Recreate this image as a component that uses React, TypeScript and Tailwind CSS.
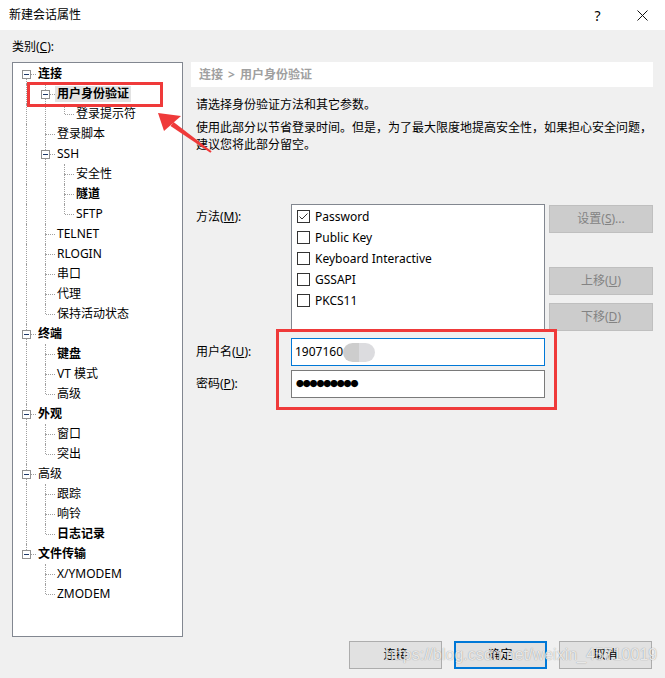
import React from "react";

type Node = { t: string; b?: boolean; sel?: boolean; c?: Node[] };
type Row = { node: Node; anc: boolean[]; hasNext: boolean; first: boolean };

const tree: Node[] = [
  {
    t: "连接",
    b: true,
    c: [
      { t: "用户身份验证", b: true, sel: true, c: [{ t: "登录提示符" }] },
      { t: "登录脚本" },
      { t: "SSH", c: [{ t: "安全性" }, { t: "隧道", b: true }, { t: "SFTP" }] },
      { t: "TELNET" },
      { t: "RLOGIN" },
      { t: "串口" },
      { t: "代理" },
      { t: "保持活动状态" },
    ],
  },
  { t: "终端", b: true, c: [{ t: "键盘", b: true }, { t: "VT 模式" }, { t: "高级" }] },
  { t: "外观", b: true, c: [{ t: "窗口" }, { t: "突出" }] },
  { t: "高级", c: [{ t: "跟踪" }, { t: "响铃" }, { t: "日志记录", b: true }] },
  { t: "文件传输", b: true, c: [{ t: "X/YMODEM" }, { t: "ZMODEM" }] },
];

function flatten(nodes: Node[], anc: boolean[], out: Row[]) {
  nodes.forEach((n, i) => {
    const hasNext = i < nodes.length - 1;
    out.push({ node: n, anc, hasNext, first: anc.length === 0 && i === 0 });
    if (n.c) flatten(n.c, [...anc, hasNext], out);
  });
  return out;
}

const rows = flatten(tree, [], []);

const methods = ["Password", "Public Key", "Keyboard Interactive", "GSSAPI", "PKCS11"];

function TreeRow({ row }: { row: Row }) {
  const { node, anc, hasNext, first } = row;
  return (
    <div className="flex h-[20px] items-center">
      {anc.map((a, k) => (
        <div key={k} className="relative h-full w-[19px] shrink-0">
          {a && <div className="absolute left-[9px] top-0 h-[20px] border-l border-dotted border-[#a0a0a0]" />}
        </div>
      ))}
      <div className="relative h-full w-[19px] shrink-0">
        {!first && <div className="absolute left-[9px] top-0 h-[10px] border-l border-dotted border-[#a0a0a0]" />}
        {hasNext && <div className="absolute left-[9px] top-[10px] h-[10px] border-l border-dotted border-[#a0a0a0]" />}
        <div className="absolute left-[10px] top-[10px] w-[9px] border-t border-dotted border-[#a0a0a0]" />
        {node.c && (
          <div className="absolute left-[5px] top-[6px] flex h-[9px] w-[9px] items-center justify-center border border-[#919191] bg-white">
            <div className="h-px w-[5px] bg-[#1e3a6a]" />
          </div>
        )}
      </div>
      <span
        className={`h-[16px] whitespace-nowrap px-[2px] leading-[16px] ${node.b ? "font-bold" : ""} ${
          node.sel ? "bg-[#e3e3e3]" : ""
        }`}
      >
        {node.t}
      </span>
    </div>
  );
}

function Checkbox({ checked }: { checked?: boolean }) {
  return (
    <div className="flex h-[13px] w-[13px] shrink-0 items-center justify-center border border-[#333333] bg-white">
      {checked && (
        <svg width="11" height="11" viewBox="0 0 11 11">
          <polyline points="1.5,5.5 4,8 9.5,2.5" fill="none" stroke="#333333" strokeWidth="1" />
        </svg>
      )}
    </div>
  );
}

function DisabledButton({ children, className }: { children: React.ReactNode; className: string }) {
  return (
    <div
      className={`flex h-[28px] w-[104px] items-center justify-center border border-[#bfbfbf] bg-[#cccccc] text-[#838383] ${className}`}
    >
      {children}
    </div>
  );
}

export default function App() {
  return (
    <div className="relative h-[678px] w-[665px] overflow-hidden bg-[#f0f0f0] font-['Noto_Sans','Noto_Sans_CJK_SC',sans-serif] text-[12px] text-black">
      {/* title bar */}
      <div className="flex h-[30px] items-center bg-white pl-[9px]">
        <span className="leading-[16px]">新建会话属性</span>
        <div className="ml-auto flex h-full w-[45px] items-center justify-center text-[14px]">?</div>
        <div className="flex h-full w-[45px] items-center justify-center">
          <svg width="11" height="11" viewBox="0 0 11 11">
            <path d="M0.5 0.5L10.5 10.5M10.5 0.5L0.5 10.5" stroke="#111" strokeWidth="1" />
          </svg>
        </div>
      </div>

      <div className="flex h-[32px] items-center pl-[12px] pt-[1px]">
        类别(<u>C</u>):
      </div>

      <div className="flex">
        {/* category tree */}
        <div className="ml-[12px] h-[575px] w-[171px] shrink-0 border border-[#828790] bg-white pl-[4px] pt-[1px]">
          {rows.map((r, i) => (
            <TreeRow key={i} row={r} />
          ))}
        </div>

        {/* settings page */}
        <div className="ml-[8px] w-[462px]">
          <div className="flex h-[25px] items-center bg-white pl-[8px] font-bold text-[#a0a0a0]">
            连接<span className="mx-[5px]">&gt;</span>用户身份验证
          </div>
          <p className="mt-[9px] pl-[5px] leading-[17px]">请选择身份验证方法和其它参数。</p>
          <p className="mt-[6px] whitespace-nowrap pl-[5px] leading-[17px]">
            使用此部分以节省登录时间。但是，为了最大限度地提高安全性，如果担心安全问题，
            <br />
            建议您将此部分留空。
          </p>

          <div className="mt-[51px] flex items-start">
            <div className="w-[100px] shrink-0 pl-[5px] pt-[4px] leading-[17px]">
              方法(<u>M</u>):
            </div>
            <div className="h-[127px] w-[254px] shrink-0 border border-[#828790] bg-white pl-[5px] pt-[1px]">
              {methods.map((m, i) => (
                <div key={m} className="flex h-[21px] items-center gap-[5px]">
                  <Checkbox checked={i === 0} />
                  <span>{m}</span>
                </div>
              ))}
            </div>
            <div className="ml-[4px] flex flex-col">
              <DisabledButton className="mt-[1px]">
                设置(<u>S</u>)...
              </DisabledButton>
              <DisabledButton className="mt-[34px]">
                上移(<u>U</u>)
              </DisabledButton>
              <DisabledButton className="mt-[8px]">
                下移(<u>D</u>)
              </DisabledButton>
            </div>
          </div>

          <div className="mt-[7px] flex items-center">
            <div className="w-[100px] shrink-0 pl-[5px]">
              用户名(<u>U</u>):
            </div>
            <div className="flex h-[28px] w-[254px] items-center border border-[#0078d7] bg-white pl-[3px]">
              <span>1907160</span>
              <div className="h-[19px] w-[32px] rounded-full bg-[linear-gradient(90deg,#cdcdcd_50%,#dcdcdf_50%)]" />
            </div>
          </div>
          <div className="mt-[4px] flex items-center">
            <div className="w-[100px] shrink-0 pl-[5px]">
              密码(<u>P</u>):
            </div>
            <div className="flex h-[28px] w-[254px] items-center border border-[#7a7a7a] bg-white pl-[4px]">
              {Array.from({ length: 9 }).map((_, i) => (
                <span key={i} className="inline-block w-[6.8px] text-center text-[8px] leading-[10px]">
                  ●
                </span>
              ))}
            </div>
          </div>
        </div>
      </div>

      {/* dialog buttons */}
      <div className="mt-[4px] flex justify-end gap-[12px] pr-[13px]">
        <div className="flex h-[28px] w-[93px] items-center justify-center border border-[#adadad] bg-[#e1e1e1]">连接</div>
        <div className="flex h-[28px] w-[93px] items-center justify-center border-2 border-[#0078d7] bg-[#e1e1e1]">确定</div>
        <div className="flex h-[28px] w-[93px] items-center justify-center border border-[#adadad] bg-[#e1e1e1]">取消</div>
      </div>

      {/* annotations */}
      <div className="absolute left-[27px] top-[82px] h-[25px] w-[136px] border-[3px] border-[#ef3a3a]" />
      <div className="absolute left-[276px] top-[329px] h-[81px] w-[281px] border-[3px] border-[#ef3a3a]" />
      <svg className="absolute left-[150px] top-[100px]" width="70" height="60" viewBox="0 0 70 60">
        <polygon points="8,13 14,31 31,16" fill="#ef3a3a" />
        <polygon points="20.5,26 23.5,22 61.6,51.2 60.4,52.8" fill="#ef3a3a" />
      </svg>

      {/* watermark */}
      <div className="absolute left-[385px] top-[645px] font-['Liberation_Sans',sans-serif] text-[16px] leading-[20px] text-white/80 [text-shadow:0_0_1px_rgba(0,0,0,0.45)]">
        https://blog.csdn.net/weixin_45710019
      </div>
    </div>
  );
}
